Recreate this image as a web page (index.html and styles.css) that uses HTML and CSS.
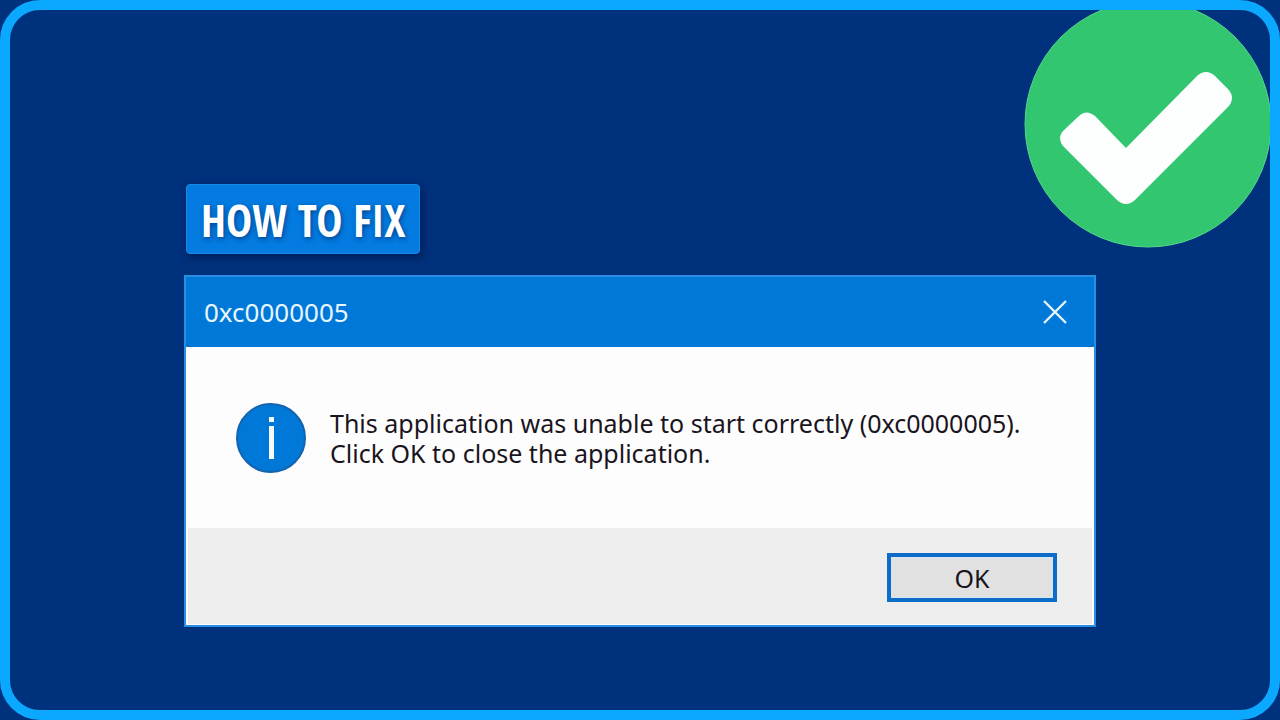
FILE: index.html
```
<!DOCTYPE html>
<html lang="en">
<head>
<meta charset="utf-8">
<meta name="viewport" content="width=device-width, initial-scale=1">
<title>How to fix 0xc0000005</title>
<link rel="stylesheet" href="styles.css">
</head>
<body>

<main class="frame">
  <svg class="badge" viewBox="0 0 248 248" aria-hidden="true">
    <circle cx="124" cy="124" r="123" fill="#32c671" stroke="#52d68c" stroke-width="1"/>
    <path fill="#fdfefe" d="M55 116 Q62 109 71 116 L102 148 L173 76 Q182 68 191 76 L204 89 Q212 98 204 107 L111 200 Q102 208 93 200 L40 147 Q32 138 40 130 Z"/>
  </svg>

  <div class="content">
    <h1 class="label">HOW TO FIX</h1>

    <section class="dialog" role="dialog" aria-labelledby="title" aria-describedby="message">
      <header class="titlebar">
        <h2 class="title" id="title">0xc0000005</h2>
        <button type="button" class="close" aria-label="Close">
          <svg width="24" height="24" viewBox="0 0 24 24">
            <path d="M1 1 L23 23 M23 1 L1 23" fill="none" stroke="#e6f6ff" stroke-width="2.4"/>
          </svg>
        </button>
      </header>

      <div class="body">
        <svg class="info" width="70" height="70" viewBox="0 0 70 70" aria-hidden="true">
          <circle cx="35" cy="35" r="34" fill="#0078d7" stroke="#1464b0" stroke-width="2"/>
          <rect x="33" y="14" width="5" height="5" fill="#f4fbff"/>
          <rect x="33" y="23" width="5" height="33" fill="#f4fbff"/>
        </svg>
        <p class="message" id="message">This application was unable to start correctly (0xc0000005).<br>Click OK to close the application.</p>
      </div>

      <footer class="actions">
        <button type="button" class="ok">OK</button>
      </footer>
    </section>
  </div>
</main>

</body>
</html>
```
FILE: styles.css
```
* {
  box-sizing: border-box;
}

body {
  margin: 0;
  background: #00317c;
  font-family: "Noto Sans", "Open Sans", sans-serif;
}

.frame {
  position: relative;
  min-height: 100vh;
  padding: 174px 24px 80px;
  overflow: hidden;
  border: 10px solid #0ba8ff;
  border-radius: 40px;
}

.badge {
  position: absolute;
  top: -10px;
  right: -2px;
  width: 248px;
  height: 248px;
}

.content {
  position: relative;
  max-width: 912px;
  margin: 0 auto;
}

.label {
  width: fit-content;
  margin: 0 0 21px 2px;
  padding: 2px 14px 0;
  border: 1px solid #188be8;
  border-radius: 4px;
  background: #037be0;
  box-shadow: 2px 3px 8px rgba(0, 15, 60, 0.6);
  color: #fff;
  font-family: "Liberation Sans Narrow", "Open Sans Condensed", sans-serif;
  font-size: 44px;
  font-weight: bold;
  line-height: 66px;
  text-shadow: 1px 2px 5px rgba(0, 30, 90, 0.6);
}

.dialog {
  border: 2px solid #2a8fe4;
  background: #fdfdfd;
}

.titlebar {
  display: flex;
  align-items: center;
  justify-content: space-between;
  height: 70px;
  padding: 0 27px 0 18px;
  background: #0078d7;
}

.title {
  margin: 0;
  color: #e6f6ff;
  font-size: 26px;
  font-weight: normal;
  line-height: 32px;
}

.close {
  display: flex;
  padding: 0;
  border: none;
  background: none;
  cursor: pointer;
}

.body {
  display: flex;
  align-items: center;
  gap: 24px;
  min-height: 181px;
  padding: 0 50px;
}

.info {
  flex: none;
}

.message {
  margin: 0;
  color: #1a1420;
  font-size: 25px;
  line-height: 30px;
}

.actions {
  display: flex;
  justify-content: flex-end;
  margin: 0 2px 1px;
  padding: 25px 35px 22px;
  background: #eee;
}

.ok {
  width: 170px;
  height: 49px;
  padding: 0;
  border: 4px solid #0c6cc8;
  background: #e1e1e1;
  box-shadow: inset 0 0 0 1px #d3e6f5;
  color: #1a1420;
  font-family: inherit;
  font-size: 25px;
  cursor: pointer;
}
```
